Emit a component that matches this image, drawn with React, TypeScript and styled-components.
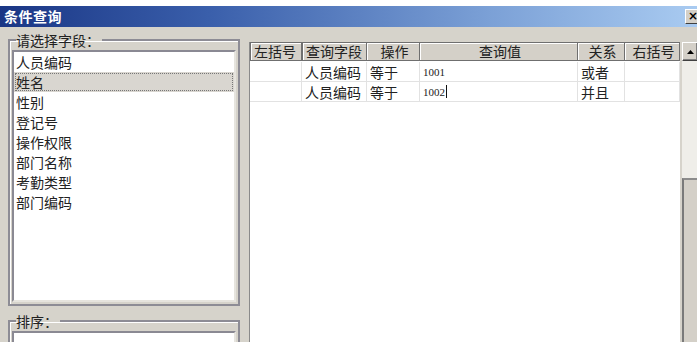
import styled, { createGlobalStyle } from 'styled-components'

const fields = ['人员编码', '姓名', '性别', '登记号', '操作权限', '部门名称', '考勤类型', '部门编码']

const columns = [
    { title: '左括号', width: 52, align: 'left' },
    { title: '查询字段', width: 65, align: 'left' },
    { title: '操作', width: 53, align: 'center' },
    { title: '查询值', width: 158, align: 'center' },
    { title: '关系', width: 47, align: 'center' },
    { title: '右括号', width: 55, align: 'center' },
]

const rows = [
    ['', '人员编码', '等于', '1001', '或者', ''],
    ['', '人员编码', '等于', '1002', '并且', ''],
]

const GlobalStyle = createGlobalStyle`
    html, body {
        margin: 0;
        padding: 0;
        background: #ffffff;
    }
    body {
        font-family: "Noto Sans CJK SC", "Noto Sans", sans-serif;
    }
`

export default function App() {
    return (
        <>
            <GlobalStyle />
            <Root>
                <TopGap />
                <TitleBar>
                    <Title>条件查询</Title>
                    <CloseBtn>×</CloseBtn>
                </TitleBar>
                <Body>
                    <LeftCol>
                        <Group>
                            <Legend>请选择字段：</Legend>
                            <ListBox>
                                {fields.map((f, i) => (
                                    <ListItem key={f} $selected={i === 1}>{f}</ListItem>
                                ))}
                            </ListBox>
                        </Group>
                        <Group>
                            <Legend>排序：</Legend>
                            <SortBox />
                        </Group>
                    </LeftCol>
                    <GridWrap>
                        <Grid $cols={columns.map(c => c.width + 'px').join(' ')}>
                            {columns.map(c => (
                                <HeadCell key={c.title} $align={c.align}>{c.title}</HeadCell>
                            ))}
                            {rows.map((r, ri) => r.map((v, ci) => (
                                <Cell key={ri + '-' + ci} $num={ci === 3}>
                                    {v}
                                    {ri === 1 && ci === 3 && <Caret />}
                                </Cell>
                            )))}
                        </Grid>
                        <ScrollBar>
                            <UpBtn>
                                <svg width="7" height="4" viewBox="0 0 7 4">
                                    <path d="M3.5 0 L7 4 L0 4 Z" fill="#000" />
                                </svg>
                            </UpBtn>
                            <Track />
                            <Thumb />
                        </ScrollBar>
                    </GridWrap>
                </Body>
            </Root>
        </>
    )
}

const Root = styled.div`
    width: 697px;
    height: 342px;
    overflow: hidden;
    background: #d6d3cb;
    display: flex;
    flex-direction: column;
`

const TopGap = styled.div`
    height: 6px;
    background: #ffffff;
    flex-shrink: 0;
`

const TitleBar = styled.div`
    height: 21px;
    flex-shrink: 0;
    display: flex;
    align-items: center;
    justify-content: space-between;
    padding-left: 4px;
    background: linear-gradient(to right, #1a3685 0%, #3a5fab 30%, #7ba0d6 70%, #a9cbf1 100%);
`

const Title = styled.span`
    color: #ffffff;
    font-size: 14px;
    font-weight: 700;
    line-height: 21px;
    letter-spacing: 0.5px;
`

const CloseBtn = styled.div`
    width: 14px;
    height: 15px;
    margin-right: -2px;
    background: #d4d0c8;
    border: 1px solid;
    border-color: #ffffff #404040 #404040 #ffffff;
    font-family: "DejaVu Sans", sans-serif;
    font-size: 12px;
    font-weight: 700;
    line-height: 13px;
    color: #000;
    padding-left: 2px;
    box-sizing: border-box;
`

const Body = styled.div`
    flex: 1;
    display: flex;
    gap: 9px;
    padding: 5px 0 0 8px;
    min-height: 0;
`

const LeftCol = styled.div`
    width: 232px;
    flex-shrink: 0;
    display: flex;
    flex-direction: column;
    gap: 7px;
`

const Group = styled.fieldset`
    margin: 0;
    padding: 0 2px 2px 2px;
    border: 2px solid #8d8c95;
    box-shadow: inset 1px 1px 0 #ffffff;
    min-width: 0;
`

const Legend = styled.legend`
    margin-left: 4px;
    padding: 0 2px 0 0;
    font-size: 14px;
    line-height: 16px;
    color: #222;
`

const ListBox = styled.div`
    margin-top: 2px;
    height: 252px;
    box-sizing: border-box;
    background: #ffffff;
    border: 2px solid;
    border-color: #8a8993 #e6e4de #e6e4de #8a8993;
`

const ListItem = styled.div<{ $selected?: boolean }>`
    height: 20px;
    line-height: 20px;
    padding-left: 2px;
    font-size: 14px;
    color: #222;
    background: ${p => p.$selected ? '#d9d6d0' : 'transparent'};
    outline: ${p => p.$selected ? '1px dotted #777' : 'none'};
    outline-offset: -2px;
`

const SortBox = styled.div`
    margin-top: 2px;
    height: 40px;
    background: #ffffff;
    border: 2px solid;
    border-color: #8a8993 #e6e4de #e6e4de #8a8993;
`

const GridWrap = styled.div`
    flex: 1;
    display: flex;
    margin-top: 10px;
    gap: 2px;
    min-width: 0;
`

const Grid = styled.div<{ $cols: string }>`
    width: 433px;
    display: grid;
    grid-template-columns: ${p => p.$cols};
    grid-auto-rows: 20px;
    align-content: start;
    background: #ffffff;
    border-left: 1px solid #8a8a8a;
`

const HeadCell = styled.div<{ $align: string }>`
    height: 19px;
    box-sizing: border-box;
    background: #d4d0c8;
    border: 1px solid #6f6f6f;
    border-left-width: ${p => p.$align === 'left' ? '1px' : '0'};
    box-shadow: inset 1px 1px 0 #ffffff;
    font-size: 14px;
    line-height: 17px;
    padding-left: 3px;
    text-align: ${p => p.$align};
    color: #222;
    white-space: nowrap;
`

const Cell = styled.div<{ $num?: boolean }>`
    box-sizing: border-box;
    border-right: 1px solid #e2e2e2;
    border-bottom: 1px solid #e2e2e2;
    padding-left: 3px;
    font-size: ${p => p.$num ? '11px' : '14px'};
    font-family: ${p => p.$num ? '"Liberation Serif", serif' : 'inherit'};
    line-height: 20px;
    color: #222;
    white-space: nowrap;
    display: flex;
    align-items: center;
`

const Caret = styled.span`
    width: 1px;
    height: 13px;
    background: #111;
    margin-left: 1px;
`

const ScrollBar = styled.div`
    width: 16px;
    flex-shrink: 0;
    display: flex;
    flex-direction: column;
`

const UpBtn = styled.div`
    height: 19px;
    box-sizing: border-box;
    background: #d4d0c8;
    border: 1px solid;
    border-color: #ffffff #404040 #404040 #ffffff;
    box-shadow: inset -1px -1px 0 #808080;
    display: flex;
    align-items: center;
    justify-content: center;
`

const Track = styled.div`
    height: 117px;
    background: #efeee9;
    border-right: 1px solid #f6f5f0;
`

const Thumb = styled.div`
    flex: 1;
    background: #d4d0c8;
    border-left: 2px solid #7a7a7a;
    border-top: 2px solid #8c8c8c;
`
